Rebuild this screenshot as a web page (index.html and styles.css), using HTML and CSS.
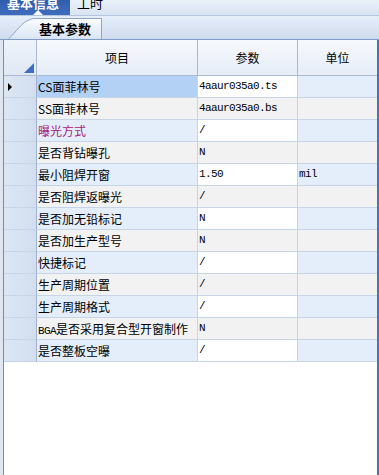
FILE: index.html
```html
<!DOCTYPE html>
<html lang="zh-CN">
<head>
  <meta charset="UTF-8" />
  <title>基本信息</title>
  <link rel="stylesheet" href="styles.css">
</head>
<body>

  <div class="tabbar">
    <div class="tab active">基本信息<span class="pointer"></span></div>
    <div class="tab">工时</div>
  </div>

  <div class="subbar">
    <div class="subtab">
      <svg class="subtab-shape" width="95" height="21" viewBox="0 0 95 21">
        <defs>
          <linearGradient id="tabfill" x1="0" y1="0" x2="0" y2="1">
            <stop offset="0" stop-color="#fbfcfe"/>
            <stop offset="1" stop-color="#d9e5f5"/>
          </linearGradient>
        </defs>
        <path d="M0.5 21 C8 14 14 4 22 1.5 Q24 0.5 27 0.5 L93.5 0.5 L93.5 21" fill="url(#tabfill)" stroke="#8ea4c4"/>
      </svg>
      <span class="subtab-label">基本参数</span>
    </div>
  </div>

  <div class="grid">
    <div class="row head">
      <div class="cell corner"><span class="corner-mark"></span></div>
      <div class="cell">项目</div>
      <div class="cell">参数</div>
      <div class="cell">单位</div>
    </div>

    <div class="row odd">
      <div class="cell rh"><span class="arrow"></span></div>
      <div class="cell name current">CS面菲林号</div>
      <div class="cell val">4aaur035a0.ts</div>
      <div class="cell unit"></div>
    </div>
    <div class="row even">
      <div class="cell rh"></div>
      <div class="cell name">SS面菲林号</div>
      <div class="cell val">4aaur035a0.bs</div>
      <div class="cell unit"></div>
    </div>
    <div class="row odd">
      <div class="cell rh"></div>
      <div class="cell name purple">曝光方式</div>
      <div class="cell val">/</div>
      <div class="cell unit"></div>
    </div>
    <div class="row even">
      <div class="cell rh"></div>
      <div class="cell name">是否背钻曝孔</div>
      <div class="cell val">N</div>
      <div class="cell unit"></div>
    </div>
    <div class="row odd">
      <div class="cell rh"></div>
      <div class="cell name">最小阻焊开窗</div>
      <div class="cell val">1.50</div>
      <div class="cell unit">mil</div>
    </div>
    <div class="row even">
      <div class="cell rh"></div>
      <div class="cell name">是否阻焊返曝光</div>
      <div class="cell val">/</div>
      <div class="cell unit"></div>
    </div>
    <div class="row odd">
      <div class="cell rh"></div>
      <div class="cell name">是否加无铅标记</div>
      <div class="cell val">N</div>
      <div class="cell unit"></div>
    </div>
    <div class="row even">
      <div class="cell rh"></div>
      <div class="cell name">是否加生产型号</div>
      <div class="cell val">N</div>
      <div class="cell unit"></div>
    </div>
    <div class="row odd">
      <div class="cell rh"></div>
      <div class="cell name">快捷标记</div>
      <div class="cell val">/</div>
      <div class="cell unit"></div>
    </div>
    <div class="row even">
      <div class="cell rh"></div>
      <div class="cell name">生产周期位置</div>
      <div class="cell val">/</div>
      <div class="cell unit"></div>
    </div>
    <div class="row odd">
      <div class="cell rh"></div>
      <div class="cell name">生产周期格式</div>
      <div class="cell val">/</div>
      <div class="cell unit"></div>
    </div>
    <div class="row even">
      <div class="cell rh"></div>
      <div class="cell name"><span class="latin">BGA</span>是否采用复合型开窗制作</div>
      <div class="cell val">N</div>
      <div class="cell unit"></div>
    </div>
    <div class="row odd">
      <div class="cell rh"></div>
      <div class="cell name">是否整板空曝</div>
      <div class="cell val">/</div>
      <div class="cell unit"></div>
    </div>
  </div>

</body>
</html>
```

FILE: styles.css
```css
body {
  margin: 0;
  width: 379px;
  height: 475px;
  overflow: hidden;
  background-color: #dde6f1;
  font-family: "Noto Sans CJK SC", "Liberation Sans", sans-serif;
  font-size: 12px;
  color: #000;
}

.tabbar {
  display: flex;
  height: 15px;
  background: linear-gradient(#e9f0f9, #d9e4f2);
  border-bottom: 1px solid #b5c6dd;
  overflow: hidden;
}

.tab {
  position: relative;
  padding: 0 8px 0 7px;
  font-size: 13px;
  line-height: 13px;
  margin-top: -4px;
  height: 19px;
}

.tab.active {
  width: 55px;
  color: #fff;
  font-weight: bold;
  background: linear-gradient(#2d5aa8, #3f6cbc);
}

.pointer {
  position: absolute;
  left: 33px;
  bottom: 0;
  width: 0;
  height: 0;
  border-left: 5px solid transparent;
  border-right: 5px solid transparent;
  border-bottom: 5px solid #fff;
}

.subbar {
  height: 23px;
  padding-left: 8px;
  display: flex;
  align-items: flex-end;
  background: linear-gradient(#e6eef9, #cfdcef);
  border-bottom: 1px solid #7f9cc6;
}

.subtab {
  position: relative;
  width: 95px;
  height: 21px;
  display: flex;
  align-items: center;
}

.subtab-shape {
  position: absolute;
  left: 0;
  top: 0;
}

.subtab-label {
  position: relative;
  padding-left: 31px;
  font-size: 13px;
  font-weight: bold;
  line-height: 21px;
}

.grid {
  margin-left: 3px;
  height: 435px;
  background-color: #fff;
  border-left: 1px solid #6f8fbe;
  border-right: 2px solid #4d72ad;
}

.row {
  display: grid;
  grid-template-columns: 33px 161px 100px 1fr;
  height: 22px;
}

.cell {
  border-right: 1px solid #c6d4e8;
  border-bottom: 1px solid #c6d4e8;
  line-height: 21px;
  white-space: nowrap;
  overflow: hidden;
}

.cell:last-child {
  border-right: none;
}

.head {
  height: 36px;
}

.head .cell {
  line-height: 35px;
  text-align: center;
  background: linear-gradient(#f6f9fd, #e6edf7);
  border-right-color: #a8b9d2;
  border-bottom-color: #a8b9d2;
}

.head .corner {
  position: relative;
  background: linear-gradient(#eef3fa, #dfe8f4);
}

.corner-mark {
  position: absolute;
  right: 2px;
  bottom: 2px;
  width: 0;
  height: 0;
  border-left: 10px solid transparent;
  border-bottom: 10px solid #3c6fc4;
}

.rh {
  position: relative;
  background: linear-gradient(to right, #dce6f3, #d2def0);
  border-right-color: #9fb3d1;
}

.arrow {
  position: absolute;
  left: 4px;
  top: 7px;
  width: 0;
  height: 0;
  border-top: 4px solid transparent;
  border-bottom: 4px solid transparent;
  border-left: 4px solid #000;
}

.name {
  padding-left: 1px;
}

.latin {
  font-family: "Liberation Mono", monospace;
  font-size: 11px;
  letter-spacing: -0.6px;
}

.name.purple {
  color: #a3237e;
}

.val,
.unit {
  padding-left: 1px;
  font-family: "Liberation Mono", "DejaVu Sans Mono", monospace;
  font-size: 11px;
  letter-spacing: -0.6px;
}

.odd .name,
.odd .unit {
  background-color: #e4eefb;
}

.odd .val {
  background-color: #fff;
}

.even .name,
.even .val,
.even .unit {
  background-color: #f2f2f2;
}

.odd .name.current {
  background-color: #b3d1f4;
}
```
